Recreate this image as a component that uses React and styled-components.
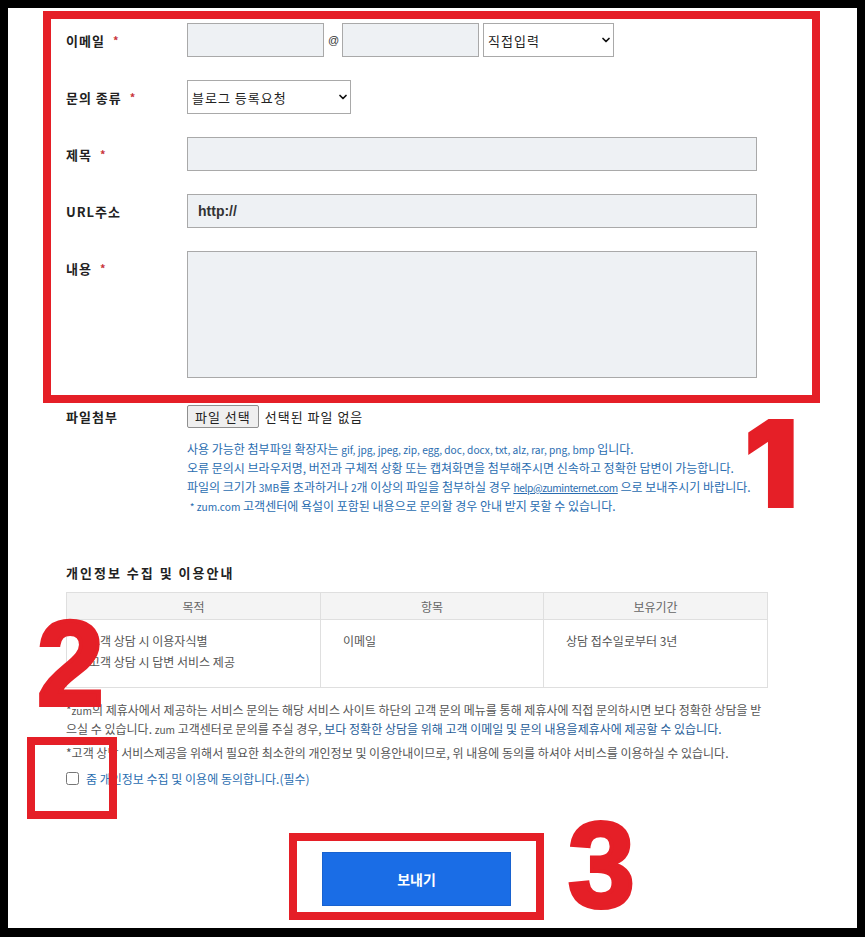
import React from 'react';
import styled, { createGlobalStyle, css } from 'styled-components';
import { ChevronDown } from 'lucide-react';

const RED = '#e51f27';
const BLUE_TEXT = '#2a6db0';

const GlobalStyle = createGlobalStyle`
  html, body { margin: 0; padding: 0; background: #000; }
  body { font-family: "Noto Sans CJK KR", "Noto Sans", sans-serif; }
  * { box-sizing: border-box; }
`;

const Frame = styled.div`
  position: relative;
  margin: 8px 8px 0 8px;
  height: 920px;
  background: #fff;
  overflow: hidden;
`;

const Highlight = styled.div`
  margin: 3px 0 0 35px;
  width: 777px;
  border: 8px solid ${RED};
  padding: 4px 0 17px 15px;
  display: flex;
  flex-direction: column;
  gap: 23px;
`;

const Row = styled.div`
  display: flex;
  align-items: flex-start;
`;

const Label = styled.div`
  width: 121px;
  flex: none;
  height: ${(p) => p.$h || 34}px;
  display: flex;
  align-items: center;
  font-size: 13px;
  font-weight: 700;
  color: #222;
  letter-spacing: 1px;
  white-space: nowrap;
`;

const Star = styled.span`
  color: #c8343a;
  font-size: 11px;
  margin-left: 8px;
`;

const FieldGroup = styled.div`
  display: flex;
  align-items: center;
  gap: 4px;
`;

const TextInput = styled.input`
  width: ${(p) => p.$w}px;
  height: 34px;
  flex: none;
  border: 1px solid #a9a9a9;
  background: #eef1f4;
  padding: 0 10px;
  font: 700 14px "Liberation Sans", Arial, sans-serif;
  color: #333;
  outline: none;
`;

const TextArea = styled.textarea`
  width: 570px;
  height: 127px;
  border: 1px solid #a9a9a9;
  background: #eef1f4;
  resize: none;
  outline: none;
  display: block;
`;

const At = styled.span`
  width: 10px;
  text-align: center;
  font: 11px "Liberation Sans", Arial, sans-serif;
  color: #333;
`;

const SelectWrap = styled.div`
  position: relative;
  width: ${(p) => p.$w}px;
  height: 34px;
  flex: none;
`;

const Select = styled.select`
  appearance: none;
  width: 100%;
  height: 100%;
  border: 1px solid #a9a9a9;
  border-radius: 0;
  background: #fff;
  padding: 0 4px;
  font-family: "Noto Sans CJK KR", sans-serif;
  font-size: 13px;
  letter-spacing: 1px;
  color: #222;
  outline: none;
`;

const Chevron = styled(ChevronDown)`
  position: absolute;
  right: 2px;
  top: 50%;
  transform: translateY(-50%);
  pointer-events: none;
  color: #111;
`;

const Content = styled.div`
  margin-left: 58px;
  width: 701px;
`;

const FileRow = styled(Row)`
  margin-top: 2px;
  align-items: center;
`;

const FileButton = styled.button`
  height: 23px;
  padding: 0 7px;
  border: 1px solid #8f8f8f;
  border-radius: 2px;
  background: #efefef;
  font-family: "Noto Sans CJK KR", sans-serif;
  font-size: 13px;
  letter-spacing: 1px;
  color: #222;
`;

const FileStatus = styled.span`
  margin-left: 6px;
  font-size: 13px;
  letter-spacing: 1px;
  color: #222;
`;

const TextLine = styled.div`
  height: 19px;
  line-height: 19px;
  margin-top: ${(p) => p.$gap || 0}px;
`;

const Help = styled.div`
  margin: 11px 0 0 121px;
  font-size: 12px;
  color: ${BLUE_TEXT};
  white-space: nowrap;
`;

const Latin = styled.span`
  font-size: 10.2px;
  line-height: 1;
`;

const HelpLink = styled.a`
  color: ${BLUE_TEXT};
  text-decoration: underline;
  font-size: 10.2px;
  line-height: 1;
  letter-spacing: -0.4px;
`;

const SectionTitle = styled.h3`
  margin: 49px 0 10px 0;
  font-size: 13px;
  line-height: 18px;
  font-weight: 700;
  color: #222;
  letter-spacing: 2px;
`;

const Table = styled.table`
  width: 701px;
  border-collapse: collapse;
  table-layout: fixed;
`;

const Th = styled.th`
  height: 27px;
  background: #f4f4f4;
  border: 1px solid #dfdfdf;
  font-size: 12px;
  font-weight: 400;
  color: #666;
  padding: 0;
`;

const Td = styled.td`
  height: 68px;
  border: 1px solid #dfdfdf;
  vertical-align: top;
  padding: 10px 22px;
  font-size: 12px;
  line-height: 21px;
  color: #555;
`;

const Notes = styled.div`
  margin-top: 12px;
  font-size: 12px;
  color: #555;
  white-space: nowrap;
`;

const NoteBlue = styled.span`
  color: #1f5d98;
`;

const CheckRow = styled.label`
  display: flex;
  align-items: center;
  height: 19px;
  margin-top: 7px;
  font-size: 12px;
  line-height: 19px;
  color: ${BLUE_TEXT};
`;

const Check = styled.input`
  width: 13px;
  height: 13px;
  margin: 0 7px 0 0;
`;

const SubmitArea = styled.div`
  display: flex;
  justify-content: center;
  margin-top: 45px;
`;

const SubmitHighlight = styled.div`
  border: 8px solid ${RED};
  padding: 11px 25px 6px 25px;
`;

const SubmitButton = styled.button`
  width: 189px;
  height: 54px;
  background: #1a6de6;
  border: 1px solid #1862cf;
  color: #fff;
  font-family: "Noto Sans CJK KR", sans-serif;
  font-size: 14px;
  font-weight: 700;
`;

const Marker = styled.span`
  position: absolute;
  left: ${(p) => p.$x}px;
  top: ${(p) => p.$y}px;
  color: ${RED};
  ${(p) =>
    p.$narrow
      ? css`
          font: 700 120px/1 "Liberation Sans", Arial, sans-serif;
          -webkit-text-stroke: 4px ${RED};
        `
      : css`
          font: 900 120px/1 Inter, Roboto, sans-serif;
          -webkit-text-stroke: 2px ${RED};
        `}
`;

const MarkerBox = styled.div`
  position: absolute;
  left: 19px;
  top: 729px;
  width: 90px;
  height: 82px;
  border: 8px solid ${RED};
`;

const Req = () => <Star>*</Star>;

export default function App() {
  return (
    <>
      <GlobalStyle />
      <Frame>
        <Highlight>
          <Row>
            <Label>이메일<Req /></Label>
            <FieldGroup>
              <TextInput $w={137} />
              <At>@</At>
              <TextInput $w={137} />
              <SelectWrap $w={131}>
                <Select defaultValue="직접입력">
                  <option>직접입력</option>
                </Select>
                <Chevron size={12} strokeWidth={3.5} />
              </SelectWrap>
            </FieldGroup>
          </Row>
          <Row>
            <Label>문의 종류<Req /></Label>
            <SelectWrap $w={164}>
              <Select defaultValue="블로그 등록요청">
                <option>블로그 등록요청</option>
              </Select>
              <Chevron size={12} strokeWidth={3.5} />
            </SelectWrap>
          </Row>
          <Row>
            <Label>제목<Req /></Label>
            <TextInput $w={570} />
          </Row>
          <Row>
            <Label>URL주소</Label>
            <TextInput $w={570} defaultValue="http://" />
          </Row>
          <Row>
            <Label>내용<Req /></Label>
            <TextArea />
          </Row>
        </Highlight>

        <Content>
          <FileRow>
            <Label $h={23}>파일첨부</Label>
            <FileButton type="button">파일 선택</FileButton>
            <FileStatus>선택된 파일 없음</FileStatus>
          </FileRow>
          <Help>
            <TextLine>
              사용 가능한 첨부파일 확장자는 <Latin>gif, jpg, jpeg, zip, egg, doc, docx, txt, alz, rar, png, bmp</Latin> 입니다.
            </TextLine>
            <TextLine>오류 문의시 브라우저명, 버전과 구체적 상황 또는 캡쳐화면을 첨부해주시면 신속하고 정확한 답변이 가능합니다.</TextLine>
            <TextLine>
              파일의 크기가 <Latin>3MB</Latin>를 초과하거나 <Latin>2</Latin>개 이상의 파일을 첨부하실 경우 <HelpLink href="#">help@zuminternet.com</HelpLink> 으로 보내주시기 바랍니다.
            </TextLine>
            <TextLine>
              &nbsp;<Latin>* zum.com</Latin> 고객센터에 욕설이 포함된 내용으로 문의할 경우 안내 받지 못할 수 있습니다.
            </TextLine>
          </Help>

          <SectionTitle>개인정보 수집 및 이용안내</SectionTitle>
          <Table>
            <colgroup>
              <col style={{ width: 254 }} />
              <col style={{ width: 223 }} />
              <col style={{ width: 224 }} />
            </colgroup>
            <thead>
              <tr>
                <Th>목적</Th>
                <Th>항목</Th>
                <Th>보유기간</Th>
              </tr>
            </thead>
            <tbody>
              <tr>
                <Td>
                  고객 상담 시 이용자식별
                  <br />
                  고객 상담 시 답변 서비스 제공
                </Td>
                <Td>이메일</Td>
                <Td>상담 접수일로부터 3년</Td>
              </tr>
            </tbody>
          </Table>

          <Notes>
            <TextLine>
              *<Latin>zum</Latin>의 제휴사에서 제공하는 서비스 문의는 해당 서비스 사이트 하단의 고객 문의 메뉴를 통해 제휴사에 직접 문의하시면 보다 정확한 상담을 받
            </TextLine>
            <TextLine>
              으실 수 있습니다. <Latin>zum</Latin> 고객센터로 문의를 주실 경우, <NoteBlue>보다 정확한 상담을 위해 고객 이메일 및 문의 내용을제휴사에 제공할 수 있습니다.</NoteBlue>
            </TextLine>
            <TextLine $gap={5}>*고객 상담 서비스제공을 위해서 필요한 최소한의 개인정보 및 이용안내이므로, 위 내용에 동의를 하셔야 서비스를 이용하실 수 있습니다.</TextLine>
            <CheckRow>
              <Check type="checkbox" />
              줌 개인정보 수집 및 이용에 동의합니다.(필수)
            </CheckRow>
          </Notes>

          <SubmitArea>
            <SubmitHighlight>
              <SubmitButton type="button">보내기</SubmitButton>
            </SubmitHighlight>
          </SubmitArea>
        </Content>

        <Marker $x={736} $y={396}>1</Marker>
        <Marker $narrow $x={29} $y={595}>2</Marker>
        <Marker $narrow $x={560} $y={797}>3</Marker>
        <MarkerBox />
      </Frame>
    </>
  );
}
